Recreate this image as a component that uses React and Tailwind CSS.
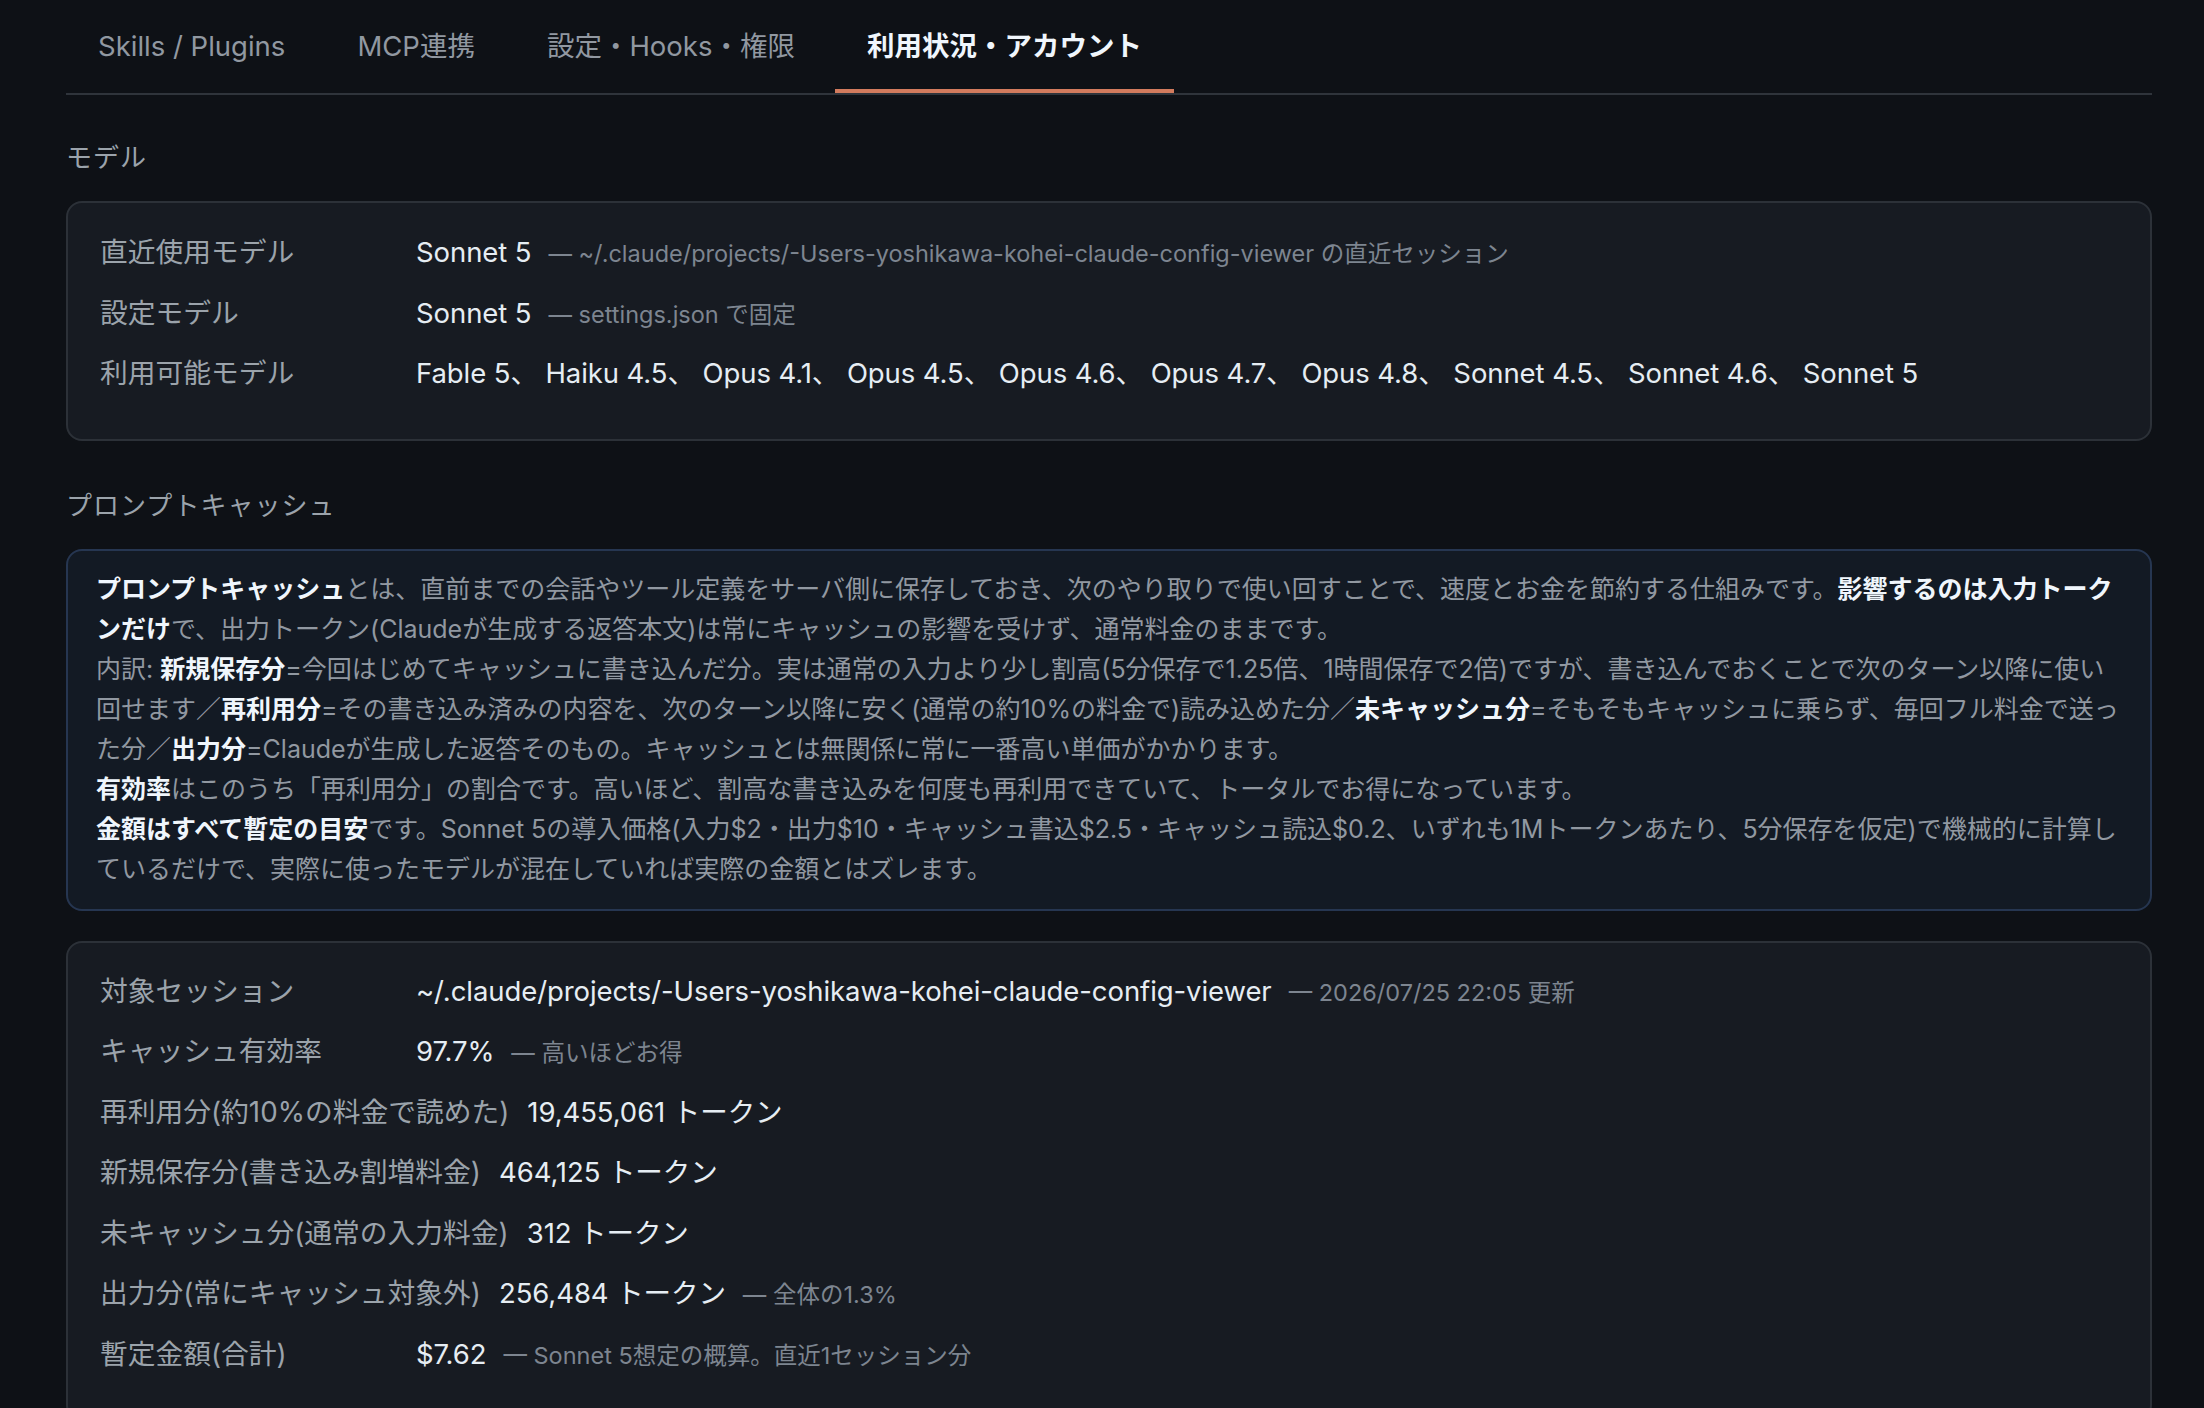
import React from 'react';

const TABS = ['Skills / Plugins', 'MCP連携', '設定・Hooks・権限', '利用状況・アカウント'];

const MODELS = ['Fable 5', 'Haiku 4.5', 'Opus 4.1', 'Opus 4.5', 'Opus 4.6', 'Opus 4.7', 'Opus 4.8', 'Sonnet 4.5', 'Sonnet 4.6', 'Sonnet 5'];

// label / value / optional note
const MODEL_ROWS = [
  ['直近使用モデル', 'Sonnet 5', '— ~/.claude/projects/-Users-yoshikawa-kohei-claude-config-viewer の直近セッション'],
  ['設定モデル', 'Sonnet 5', '— settings.json で固定'],
  ['利用可能モデル', MODELS.join('、 '), null],
];

const STAT_ROWS = [
  ['対象セッション', '~/.claude/projects/-Users-yoshikawa-kohei-claude-config-viewer', '— 2026/07/25 22:05 更新'],
  ['キャッシュ有効率', '97.7%', '— 高いほどお得'],
  ['再利用分(約10%の料金で読めた)', '19,455,061 トークン', null],
  ['新規保存分(書き込み割増料金)', '464,125 トークン', null],
  ['未キャッシュ分(通常の入力料金)', '312 トークン', null],
  ['出力分(常にキャッシュ対象外)', '256,484 トークン', '— 全体の1.3%'],
  ['暫定金額(合計)', '$7.62', '— Sonnet 5想定の概算。直近1セッション分'],
];

const B = ({ children }) => <b className="font-bold text-[#f0f6fc]">{children}</b>;

function InfoRows({ rows }) {
  return (
    <div className="flex flex-col gap-[16px]">
      {rows.map(([label, value, note]) => (
        <div key={label} className="flex items-baseline gap-[18px] leading-[44.5px]">
          <span className="min-w-[298px] text-[27.75px] text-[#9ba3ab] whitespace-nowrap">{label}</span>
          <span className="text-[27.5px] tracking-[-0.003em] text-[#e6edf3] whitespace-nowrap">{value}</span>
          {note && <span className="ml-[-1px] text-[23.5px] leading-[24px] text-[#7d8590] whitespace-nowrap">{note}</span>}
        </div>
      ))}
    </div>
  );
}

export default function App() {
  return (
    <div
      className="h-screen overflow-hidden bg-[#0e1116] pl-[66px] pr-[52px]"
      style={{ fontFamily: 'Inter, "Noto Sans CJK JP", sans-serif' }}
    >
      {/* Tabs */}
      <nav className="flex gap-[8px] border-b-2 border-[#2f343b]">
        {TABS.map((tab, i) => {
          const active = i === TABS.length - 1;
          return (
            <span
              key={tab}
              className={`px-[32px] pt-[25px] pb-[22px] text-[27.5px] leading-[42px] border-b-4 whitespace-nowrap ${
                active ? 'border-[#d27b5d] text-[#f0f6fc] font-bold' : 'border-transparent text-[#9198a1]'
              }`}
            >
              {tab}
            </span>
          );
        })}
      </nav>

      {/* モデル */}
      <h2 className="mt-[43px] mb-[23px] text-[26px] tracking-[0.04em] leading-[40px] font-normal text-[#9ba3ab]">モデル</h2>
      <section className="rounded-[16px] border-2 border-[#2c3138] bg-[#171b22] pl-[32px] pr-[32px] pt-[27px] pb-[43px]">
        <InfoRows rows={MODEL_ROWS} />
      </section>

      {/* プロンプトキャッシュ */}
      <h2 className="mt-[45px] mb-[23px] text-[26px] tracking-[0.04em] leading-[40px] font-normal text-[#9ba3ab]">プロンプトキャッシュ</h2>
      <section className="rounded-[16px] border-2 border-[#263651] bg-[#131a24] px-[28px] pt-[18px] pb-[20px] text-[25px] leading-[40px] text-[#9198a1]">
        <p>
          <B>プロンプトキャッシュ</B>とは、直前までの会話やツール定義をサーバ側に保存しておき、次のやり取りで使い回すことで、速度とお金を節約する仕組みです。<B>影響するのは入力トークンだけ</B>で、出力トークン(Claudeが生成する返答本文)は常にキャッシュの影響を受けず、通常料金のままです。
        </p>
        <p>
          内訳: <B>新規保存分</B>=今回はじめてキャッシュに書き込んだ分。実は通常の入力より少し割高(5分保存で1.25倍、1時間保存で2倍)ですが、書き込んでおくことで次のターン以降に使い回せます／<B>再利用分</B>=その書き込み済みの内容を、次のターン以降に安く(通常の約10%の料金で)読み込めた分／<B>未キャッシュ分</B>=そもそもキャッシュに乗らず、毎回フル料金で送った分／<B>出力分</B>=Claudeが生成した返答そのもの。キャッシュとは無関係に常に一番高い単価がかかります。
        </p>
        <p>
          <B>有効率</B>はこのうち「再利用分」の割合です。高いほど、割高な書き込みを何度も再利用できていて、トータルでお得になっています。
        </p>
        <p>
          <B>金額はすべて暫定の目安</B>です。Sonnet 5の導入価格(入力$2・出力$10・キャッシュ書込$2.5・キャッシュ読込$0.2、いずれも1Mトークンあたり、5分保存を仮定)で機械的に計算しているだけで、実際に使ったモデルが混在していれば実際の金額とはズレます。
        </p>
      </section>

      {/* Session stats */}
      <section className="mt-[30px] rounded-[16px] border-2 border-[#2c3138] bg-[#171b22] px-[32px] pt-[26px] pb-[43px]">
        <InfoRows rows={STAT_ROWS} />
      </section>
    </div>
  );
}
